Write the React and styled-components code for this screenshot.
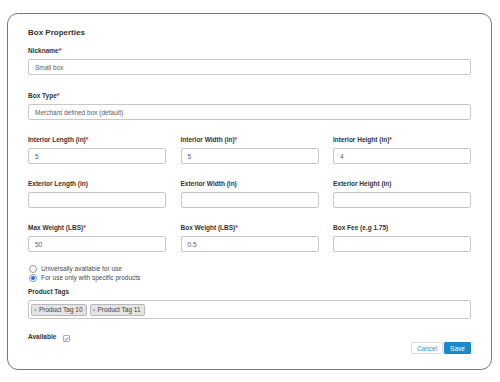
import React from 'react'
import styled, { createGlobalStyle } from 'styled-components'

const GlobalStyle = createGlobalStyle`
  body {
    margin: 0;
    background: #fff;
    font-family: "Liberation Sans", Arial, sans-serif;
  }
`

const Page = styled.div`
  width: 500px;
  height: 382px;
  padding: 13px 8px 0 7px;
  box-sizing: border-box;
`

const Card = styled.div`
  width: 485px;
  box-sizing: border-box;
  border: 1px solid #7a7a7a;
  border-radius: 11px;
  padding: 14px 20px 15px 20px;
  display: flex;
  flex-direction: column;
`

const Title = styled.h2`
  margin: 0 0 9px;
  font-size: 8px;
  line-height: 10px;
  font-weight: bold;
  color: #333;
`

const Group = styled.div`
  display: flex;
  flex-direction: column;
  margin-bottom: ${p => p.mb ?? 16}px;
`

const Row = styled.div`
  display: grid;
  grid-template-columns: repeat(3, 1fr);
  column-gap: 14.5px;
  margin-bottom: ${p => p.mb ?? 16}px;
`

const Label = styled.label`
  font-size: 6.5px;
  line-height: 8px;
  font-weight: bold;
  color: #333;
  margin-bottom: ${p => p.mb ?? 4}px;
  white-space: nowrap;
`

const Req = styled.span`
  color: #e02020;
`

const Input = styled.div`
  height: 16px;
  box-sizing: border-box;
  border: 1px solid #c8c8c8;
  border-radius: 2px;
  padding: 0 6px;
  display: flex;
  align-items: center;
  font-size: 6.5px;
  color: #606060;
  background: #fff;
`

const Radios = styled.div`
  display: flex;
  flex-direction: column;
  margin-bottom: 6px;
`

const RadioRow = styled.div`
  display: flex;
  align-items: center;
  height: 9px;
  font-size: 6.5px;
  color: #4a4a4a;
`

const RadioDot = styled.span`
  width: 8px;
  height: 8px;
  box-sizing: border-box;
  border-radius: 50%;
  border: 1px solid ${p => (p.checked ? '#6a9fd8' : '#9a9a9a')};
  margin: 0 4px 0 1px;
  display: flex;
  align-items: center;
  justify-content: center;
  background: #fff;

  &::after {
    content: '';
    display: ${p => (p.checked ? 'block' : 'none')};
    width: 4px;
    height: 4px;
    border-radius: 50%;
    background: #1f6fd0;
  }
`

const TagBox = styled(Input)`
  height: 19px;
  padding: 0 2px;
  gap: 3px;
`

const Tag = styled.span`
  height: 12px;
  box-sizing: border-box;
  display: flex;
  align-items: center;
  background: #e4e4e4;
  border: 1px solid #b8b8b8;
  border-radius: 2px;
  padding: 0 3px 0 2px;
  font-size: 6.5px;
  color: #444;
`

const TagX = styled.span`
  color: #888;
  font-size: 5px;
  margin-right: 2px;
`

const AvailableRow = styled.div`
  display: flex;
  align-items: center;
  height: 10px;
  margin-top: 13px;
`

const Check = styled.span`
  width: 7px;
  height: 7px;
  box-sizing: border-box;
  border: 1px solid #9ab4d6;
  border-radius: 1px;
  margin-left: 7px;
  margin-top: 3px;
  display: flex;
  align-items: center;
  justify-content: center;
  background: #fff;
`

const Footer = styled.div`
  display: flex;
  justify-content: flex-end;
  gap: 1px;
`

const Button = styled.button`
  height: 12px;
  box-sizing: border-box;
  padding: 0;
  width: ${p => p.w}px;
  font-family: inherit;
  font-size: 6.5px;
  border-radius: 1px;
  border: 1px solid ${p => (p.primary ? '#1a88c9' : '#dcdcdc')};
  background: ${p => (p.primary ? '#1a88c9' : '#fff')};
  color: ${p => (p.primary ? '#fff' : '#3d8fd1')};
`

const Field = ({ label, required, value }) => (
  <Group mb={0}>
    <Label>
      {label}
      {required && <Req>*</Req>}
    </Label>
    <Input>{value}</Input>
  </Group>
)

export default function App() {
  return (
    <Page>
      <GlobalStyle />
      <Card>
        <Title>Box Properties</Title>
        <Group mb={17}>
          <Label>Nickname<Req>*</Req></Label>
          <Input>Small box</Input>
        </Group>
        <Group>
          <Label>Box Type<Req>*</Req></Label>
          <Input>Merchant defined box (default)</Input>
        </Group>
        <Row>
          <Field label="Interior Length (in)" required value="5" />
          <Field label="Interior Width (in)" required value="5" />
          <Field label="Interior Height (in)" required value="4" />
        </Row>
        <Row>
          <Field label="Exterior Length (in)" />
          <Field label="Exterior Width (in)" />
          <Field label="Exterior Height (in)" />
        </Row>
        <Row mb={12}>
          <Field label="Max Weight (LBS)" required value="50" />
          <Field label="Box Weight (LBS)" required value="0.5" />
          <Field label="Box Fee (e.g 1.75)" />
        </Row>
        <Radios>
          <RadioRow><RadioDot />Universally available for use</RadioRow>
          <RadioRow><RadioDot checked />For use only with specific products</RadioRow>
        </Radios>
        <Group mb={0}>
          <Label>Product Tags</Label>
          <TagBox>
            <Tag><TagX>×</TagX>Product Tag 10</Tag>
            <Tag><TagX>×</TagX>Product Tag 11</Tag>
          </TagBox>
        </Group>
        <AvailableRow>
          <Label as="span" mb={0}>Available</Label>
          <Check>
            <svg width="6" height="6" viewBox="0 0 10 10">
              <path d="M1.5 5.2 L4 7.6 L8.7 2" fill="none" stroke="#2a6fc4" strokeWidth="1.6" />
            </svg>
          </Check>
        </AvailableRow>
        <Footer>
          <Button w={32}>Cancel</Button>
          <Button primary w={27}>Save</Button>
        </Footer>
      </Card>
    </Page>
  )
}
